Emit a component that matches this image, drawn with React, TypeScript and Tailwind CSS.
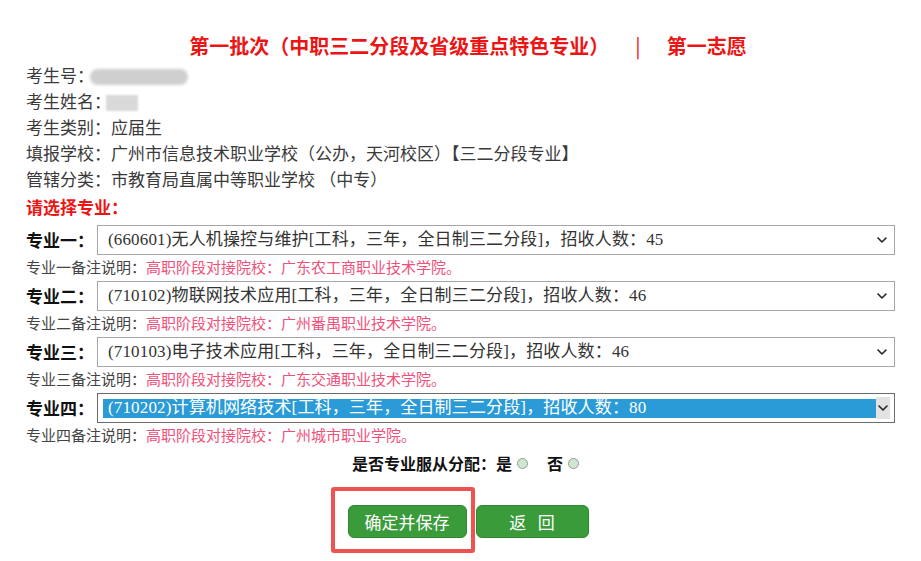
const bodyFont = { fontFamily: '"Liberation Serif", "Noto Sans CJK SC", serif' };

const infoLines = [
  { label: "考生类别：", value: "应届生" },
  { label: "填报学校：", value: "广州市信息技术职业学校（公办，天河校区）【三二分段专业】" },
  { label: "管辖分类：", value: "市教育局直属中等职业学校 （中专）" },
];

const choices = [
  {
    no: "一",
    text: "(660601)无人机操控与维护[工科，三年，全日制三二分段]，招收人数：45",
    school: "广东农工商职业技术学院。",
  },
  {
    no: "二",
    text: "(710102)物联网技术应用[工科，三年，全日制三二分段]，招收人数：46",
    school: "广州番禺职业技术学院。",
  },
  {
    no: "三",
    text: "(710103)电子技术应用[工科，三年，全日制三二分段]，招收人数：46",
    school: "广东交通职业技术学院。",
  },
  {
    no: "四",
    text: "(710202)计算机网络技术[工科，三年，全日制三二分段]，招收人数：80",
    school: "广州城市职业学院。",
    focused: true,
  },
];

function Chevron() {
  return (
    <svg width="10" height="6" viewBox="0 0 10 6" fill="none">
      <path d="M1 1l4 4 4-4" stroke="#222" strokeWidth="1.6" strokeLinecap="round" strokeLinejoin="round" />
    </svg>
  );
}

function FakeSelect({ text, focused }: { text: string; focused?: boolean }) {
  if (focused) {
    return (
      <div className="flex h-[30px] w-[798px] items-center border border-[#6b6b6b] bg-white pl-[5px] pr-[4px]">
        <div className="flex h-[19px] flex-1 items-center bg-[#2a9bd6] pl-[5px] text-[17px] tracking-[0.15px] text-white">
          {text}
        </div>
        <div className="flex h-[22px] w-[14px] items-center justify-center bg-[#e3e3e3]">
          <Chevron />
        </div>
      </div>
    );
  }
  return (
    <div className="flex h-[30px] w-[798px] items-center justify-between border border-[#a6a6a6] bg-white pl-[10px] pr-[7px] text-[17px] tracking-[0.15px] text-[#333]">
      <span>{text}</span>
      <Chevron />
    </div>
  );
}

function Radio() {
  return <span className="mx-[5px] inline-block h-[11px] w-[11px] rounded-full border border-[#9a9a9a] bg-[#cde8cf] align-middle" />;
}

export default function App() {
  return (
    <div className="min-h-[561px] w-[921px] bg-white pl-[26px] pr-[11px] pt-[27px]" style={bodyFont}>
      <div
        className="flex h-[37px] items-center justify-center text-[20px] font-bold text-[#ec1515]"
        style={{ fontFamily: '"Noto Sans CJK SC", sans-serif' }}
      >
        <span>第一批次（中职三二分段及省级重点特色专业）</span>
        <span className="mx-[26px] font-normal">|</span>
        <span>第一志愿</span>
      </div>

      <div className="text-[17px] leading-[26px] text-[#3a3a3a]">
        <div className="flex items-center">
          <span>考生号：</span>
          <span className="ml-[-4px] inline-block h-[16px] w-[98px] rounded-[8px] bg-[#cfcfcf] blur-[1.5px]" />
        </div>
        <div className="flex items-center">
          <span>考生姓名：</span>
          <span className="ml-[-5px] inline-block h-[16px] w-[32px] bg-[#d9d9d9] blur-[1px]" />
        </div>
        {infoLines.map((l) => (
          <div key={l.label}>
            {l.label}
            {l.value}
          </div>
        ))}
        <div
          className="font-bold text-[#ec1515]"
          style={{ fontFamily: '"Noto Sans CJK SC", sans-serif' }}
        >
          请选择专业：
        </div>
      </div>

      <div className="mt-[5px]">
        {choices.map((c) => (
          <div key={c.no}>
            <div className="flex h-[30px] items-center">
              <span
                className="w-[71px] text-[17px] font-bold text-[#111]"
                style={{ fontFamily: '"Noto Sans CJK SC", sans-serif' }}
              >
                专业{c.no}：
              </span>
              <FakeSelect text={c.text} focused={c.focused} />
            </div>
            <div className="h-[26px] text-[15px] leading-[26px]">
              <span className="text-[#444]">专业{c.no}备注说明：</span>
              <span className="text-[#f0507a]">高职阶段对接院校：{c.school}</span>
            </div>
          </div>
        ))}
      </div>

      <div
        className="flex h-[28px] items-center justify-center text-[16px] font-bold text-[#111]"
        style={{ fontFamily: '"Noto Sans CJK SC", sans-serif' }}
      >
        <span>是否专业服从分配：是</span>
        <Radio />
        <span className="ml-[14px]">否</span>
        <Radio />
      </div>

      <div
        className="mt-[28px] flex justify-center gap-[9px] text-[17px] text-white"
        style={{ fontFamily: '"Noto Sans CJK SC", sans-serif' }}
      >
        <div className="relative">
          <button className="h-[33px] w-[119px] rounded-[6px] border border-[#2f8a2f] bg-[#3a9b3a]">
            确定并保存
          </button>
          <div className="pointer-events-none absolute left-[-17px] top-[-18px] h-[66px] w-[144px] rounded-[3px] border-[4px] border-[#f0524f]" />
        </div>
        <button className="h-[33px] w-[113px] rounded-[6px] border border-[#2f8a2f] bg-[#3a9b3a]">
          返&nbsp;&nbsp;&nbsp;回
        </button>
      </div>
    </div>
  );
}
